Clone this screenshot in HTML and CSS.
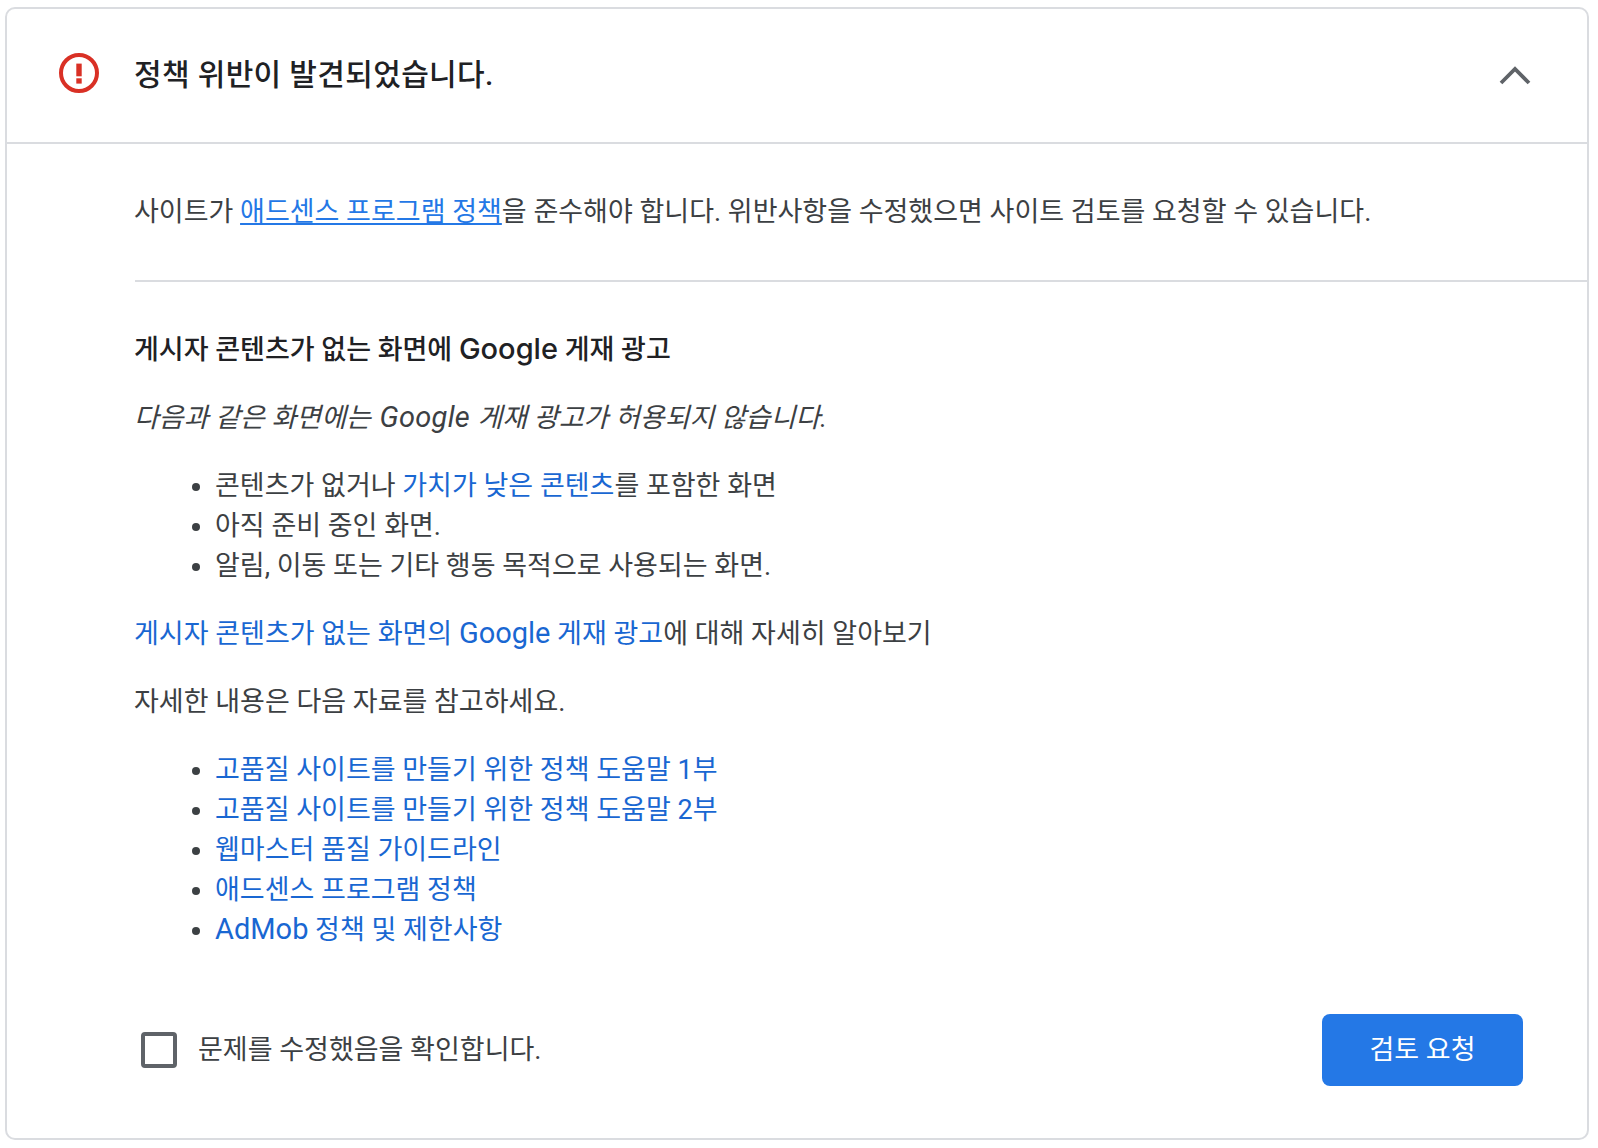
FILE: index.html
```html
<!DOCTYPE html>
<html lang="ko">
<head>
<meta charset="utf-8">
<title>정책 위반</title>
<link rel="stylesheet" href="styles.css">
</head>
<body>
<section class="card">
  <header class="head">
    <svg class="alert" width="42" height="42" viewBox="0 0 42 42"><circle cx="21" cy="21" r="18" fill="none" stroke="#d93025" stroke-width="4"/><rect x="18.3" y="11.6" width="5.4" height="12.7" fill="#d93025"/><rect x="18.3" y="26.3" width="5.4" height="5.3" fill="#d93025"/></svg>
    <h1 class="title">정책 위반이 발견되었습니다.</h1>
    <svg class="chev" width="34" height="22" viewBox="0 0 34 22"><path d="M3 19 L17 5 L31 19" fill="none" stroke="#5f6368" stroke-width="3.8"/></svg>
  </header>
  <div class="body">
    <p class="intro">사이트가 <a class="ul" href="#">애드센스 프로그램 정책</a>을 준수해야 합니다. 위반사항을 수정했으면 사이트 검토를 요청할 수 있습니다.</p>
    <div class="content">
      <p class="strong">게시자 콘텐츠가 없는 화면에 <span class="lat-b">Google</span> 게재 광고</p>
      <p class="it">다음과 같은 화면에는 <span class="lat lat-it">Google </span>게재 광고가 허용되지 않습니다.</p>
      <ul>
        <li>콘텐츠가 없거나 <a href="#">가치가 낮은 콘텐츠</a>를 포함한 화면</li>
        <li>아직 준비 중인 화면.</li>
        <li>알림, 이동 또는 기타 행동 목적으로 사용되는 화면.</li>
      </ul>
      <p><a href="#">게시자 콘텐츠가 없는 화면의 <span class="lat">Google</span> 게재 광고</a>에 대해 자세히 알아보기</p>
      <p>자세한 내용은 다음 자료를 참고하세요.</p>
      <ul>
        <li><a href="#">고품질 사이트를 만들기 위한 정책 도움말 1부</a></li>
        <li><a href="#">고품질 사이트를 만들기 위한 정책 도움말 2부</a></li>
        <li><a href="#">웹마스터 품질 가이드라인</a></li>
        <li><a href="#">애드센스 프로그램 정책</a></li>
        <li><a href="#"><span class="lat">AdMob</span> 정책 및 제한사항</a></li>
      </ul>
    </div>
    <div class="foot">
      <label class="check"><span class="box"></span><span>문제를 수정했음을 확인합니다.</span></label>
      <button class="btn">검토 요청</button>
    </div>
  </div>
</section>
</body>
</html>
```
FILE: styles.css
```css
* { box-sizing: border-box; }
html, body { margin: 0; background: #fff; }
body {
  padding: 7px 9px 8px 5px;
  font-family: Roboto, "Noto Sans CJK KR", sans-serif;
  font-size: 27px;
  line-height: 40px;
  color: #3c4043;
}
.card {
  height: 1133px;
  border: 2px solid #dadce0;
  border-radius: 10px;
  display: flex;
  flex-direction: column;
}
.head {
  height: 135px;
  flex: none;
  display: flex;
  align-items: center;
  border-bottom: 2px solid #dadce0;
  padding: 0 55px 0 51px;
}
.alert { flex: none; margin-bottom: 5px; }
.title {
  margin: 0 0 1px 34px;
  flex: 1;
  font-size: 30px;
  font-weight: 500;
  letter-spacing: 0.35px;
  color: #202124;
}
.chev { flex: none; margin-top: -1px; }
.body {
  flex: 1;
  padding-left: 128px;
  display: flex;
  flex-direction: column;
}
.intro {
  margin: 0;
  padding: 48px 0;
  border-bottom: 2px solid #dadce0;
  text-indent: -1px;
}
.content { padding-top: 48px; }
.content p { margin: 0 0 28px; text-indent: -1px; }
.strong { font-weight: 500; color: #202124; }
.it { font-style: italic; }
.lat { font-size: 29px; line-height: 1; }
.lat-it { margin-left: 2px; letter-spacing: 0.3px; }
.lat-b { font-family: Inter, Roboto, sans-serif; font-size: 29px; line-height: 1; }
ul { margin: 0 0 28px; padding: 0 0 0 80px; }
a { color: #1967d2; text-decoration: none; }
a.ul { color: #2478e6; text-decoration: underline; }
.foot {
  margin-top: auto;
  padding: 0 64px 52px 6px;
  display: flex;
  align-items: center;
  justify-content: space-between;
}
.check { display: flex; align-items: center; gap: 21px; }
.box {
  width: 36px;
  height: 36px;
  border: 4px solid #5f6368;
  border-radius: 4px;
}
.btn {
  width: 201px;
  height: 72px;
  border: 0;
  border-radius: 8px;
  background: #2478e6;
  color: #fff;
  font: inherit;
}
```
